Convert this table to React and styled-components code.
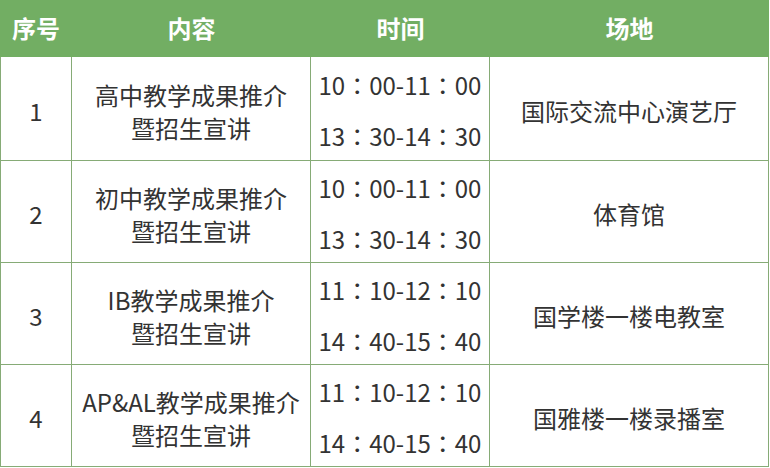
import React from "react";
import styled, { createGlobalStyle } from "styled-components";

const GlobalStyle = createGlobalStyle`
  html, body {
    margin: 0;
    padding: 0;
    background: #ffffff;
  }
  body {
    font-family: "Noto Sans CJK SC", "Noto Sans", sans-serif;
  }
`;

const rows = [
  {
    no: "1",
    title: ["高中教学成果推介", "暨招生宣讲"],
    times: ["10：00-11：00", "13：30-14：30"],
    place: "国际交流中心演艺厅",
  },
  {
    no: "2",
    title: ["初中教学成果推介", "暨招生宣讲"],
    times: ["10：00-11：00", "13：30-14：30"],
    place: "体育馆",
  },
  {
    no: "3",
    title: ["IB教学成果推介", "暨招生宣讲"],
    times: ["11：10-12：10", "14：40-15：40"],
    place: "国学楼一楼电教室",
  },
  {
    no: "4",
    title: ["AP&AL教学成果推介", "暨招生宣讲"],
    times: ["11：10-12：10", "14：40-15：40"],
    place: "国雅楼一楼录播室",
  },
];

const Schedule = () => {
  return (
    <>
      <GlobalStyle />
      <Table>
        <HeadCell>序号</HeadCell>
        <HeadCell>内容</HeadCell>
        <HeadCell>时间</HeadCell>
        <HeadCell>场地</HeadCell>
        {rows.map((r) => (
          <React.Fragment key={r.no}>
            <Cell $first>{r.no}</Cell>
            <Cell>
              <Lines>
                {r.title.map((t) => (
                  <span key={t}>{t}</span>
                ))}
              </Lines>
            </Cell>
            <Cell>
              <Times>
                {r.times.map((t) => (
                  <span key={t}>{t}</span>
                ))}
              </Times>
            </Cell>
            <Cell>{r.place}</Cell>
          </React.Fragment>
        ))}
      </Table>
    </>
  );
};

const Table = styled.div`
  display: grid;
  grid-template-columns: 72px 239px 179px 279px;
  grid-template-rows: 57px 104px repeat(3, 102px);
  width: 769px;
  color: #333333;
  font-size: 24px;
`;

const HeadCell = styled.div`
  display: flex;
  align-items: center;
  justify-content: center;
  background: #72ae63;
  color: #ffffff;
  font-weight: 700;
  padding-bottom: 2px;
`;

const Cell = styled.div`
  box-sizing: border-box;
  display: flex;
  align-items: center;
  justify-content: center;
  text-align: center;
  padding-top: 4px;
  border-right: 1px solid #86ab76;
  border-bottom: 1px solid #86ab76;
  border-left: ${(p) => (p.$first ? "1px solid #86ab76" : "none")};
  line-height: 1.4;
`;

const Lines = styled.div`
  display: flex;
  flex-direction: column;
  align-items: center;
  line-height: 33px;
`;

// TC variant centres the full-width colon, as in the reference
const Times = styled.div`
  display: flex;
  flex-direction: column;
  align-items: center;
  gap: 17px;
  line-height: 34px;
  font-family: "Noto Sans CJK TC", "Noto Sans CJK SC", sans-serif;
`;

export default Schedule;
